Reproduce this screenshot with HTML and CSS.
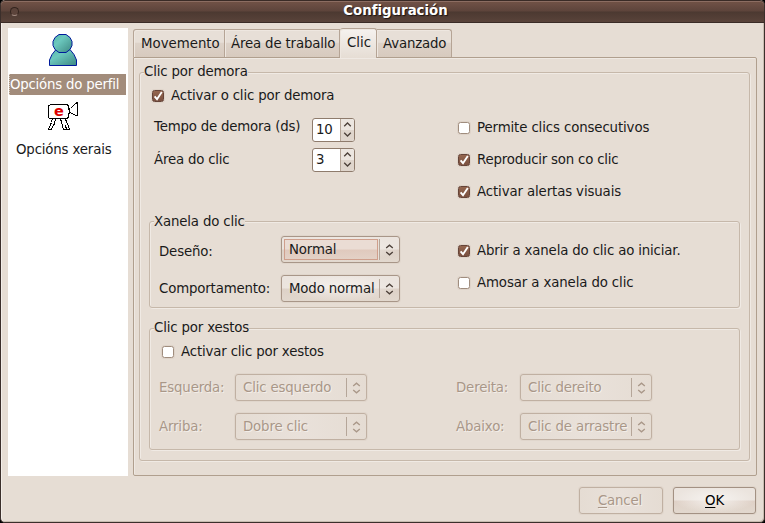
FILE: index.html
```html
<!DOCTYPE html>
<html lang="gl">
<head>
<meta charset="utf-8">
<title>Configuración</title>
<link rel="stylesheet" href="styles.css">
</head>
<body>
<svg class="defs" width="0" height="0" aria-hidden="true">
  <symbol id="tick" viewBox="0 0 12 12"><path d="M2.600 6.400 5 9.200 9.800 2" fill="none" stroke="#fff" stroke-width="1.9"/></symbol>
  <symbol id="updown" viewBox="0 0 9 12"><path d="M1.200 4 4.500 1.200 7.800 4M1.200 8 4.500 10.800 7.800 8" fill="none" stroke="currentColor" stroke-width="1.3"/></symbol>
  <symbol id="up" viewBox="0 0 9 5"><path d="M1.2 4.2 4.5 1 7.800 4.200" fill="none" stroke="currentColor" stroke-width="1.3"/></symbol>
  <symbol id="down" viewBox="0 0 9 5"><path d="M1.2 .8 4.5 4 7.800 .800" fill="none" stroke="currentColor" stroke-width="1.3"/></symbol>
</svg>
<div class="window">
  <header class="titlebar"><span class="dot"></span><h1>Configuración</h1></header>
  <main class="body">
    <nav class="sidebar">
      <svg class="person" width="30" height="34" viewBox="0 0 30 34">
        <defs><linearGradient id="teal" x1="0" y1="0" x2="1" y2="1"><stop offset="0" stop-color="#55b5aa"/><stop offset=".35" stop-color="#6cc8be"/><stop offset="1" stop-color="#3d8882"/></linearGradient></defs>
        <path d="M1.500 32.500V27L4 21.500l4-5h14l4 5 2.500 5.500v5.500z" fill="url(#teal)" stroke="#001a9c"/>
        <path d="M11 1.500h7l4 3 2 4v4l-2 4-4 3h-7l-4-3-2-4v-4l2-4z" fill="url(#teal)" stroke="#001a9c"/>
      </svg>
      <div class="entry selected">Opcións do perfil</div>
      <svg class="camera" width="32" height="30" viewBox="0 0 32 30">
        <g fill="#fff" stroke="#000" shape-rendering="crispEdges">
          <path d="M5.500 17.500l-1 4-3 6.500h3l3-5.500 1-5M13.500 17.500l1 4 2 7h3l-1-4 1 4h3l-1-4-2-3-1-4"/>
          <path d="M1.500 5l2-1.500h17l1 2v3l2-1 5-5 2-1v13h-2l-3-2-3-1-1 1v4l-2 1h-17l-1-1z"/>
          <path d="M22.500 8.500v4"/>
        </g>
        <text x="7" y="15" class="badge">e</text>
      </svg>
      <div class="entry">Opcións xerais</div>
    </nav>
    <section class="notebook">
      <div class="tabs">
        <div class="tab t1">Movemento</div><div class="tab t2">Área de traballo</div><div class="tab t3 active">Clic</div><div class="tab t4">Avanzado</div>
      </div>
      <div class="panel">
        <div class="group outer">
          <h2 class="legend">Clic por demora</h2>
          <label class="check dwell"><span class="box on"><svg><use href="#tick"/></svg></span>Activar o clic por demora</label>
          <div class="columns timing">
            <div class="left">
              <div class="row"><span class="name">Tempo de demora (ds)</span><span class="spin"><b>10</b><i><svg><use href="#up"/></svg><svg><use href="#down"/></svg></i></span></div>
              <div class="row"><span class="name second">Área do clic</span><span class="spin"><b>3</b><i><svg><use href="#up"/></svg><svg><use href="#down"/></svg></i></span></div>
            </div>
            <div class="checks">
              <label class="check wide"><span class="box"></span>Permite clics consecutivos</label>
              <label class="check tight"><span class="box on"><svg><use href="#tick"/></svg></span>Reproducir son co clic</label>
              <label class="check wide"><span class="box on"><svg><use href="#tick"/></svg></span>Activar alertas visuais</label>
            </div>
          </div>
          <div class="group inner clickwin">
            <h2 class="legend">Xanela do clic</h2>
            <div class="columns">
              <div class="left">
                <div class="row"><span class="name">Deseño:</span><span class="combo focus"><b>Normal</b><svg><use href="#updown"/></svg></span></div>
                <div class="row"><span class="name">Comportamento:</span><span class="combo"><b>Modo normal</b><svg><use href="#updown"/></svg></span></div>
              </div>
              <div class="checks">
                <label class="check"><span class="box on"><svg><use href="#tick"/></svg></span>Abrir a xanela do clic ao iniciar.</label>
                <label class="check wide"><span class="box"></span>Amosar a xanela do clic</label>
              </div>
            </div>
          </div>
          <div class="group inner gestures">
            <h2 class="legend">Clic por xestos</h2>
            <label class="check"><span class="box"></span>Activar clic por xestos</label>
            <div class="grid off">
              <span>Esquerda:</span><span class="combo"><b>Clic esquerdo</b><svg><use href="#updown"/></svg></span>
              <span class="col2">Dereita:</span><span class="combo"><b>Clic dereito</b><svg><use href="#updown"/></svg></span>
              <span>Arriba:</span><span class="combo"><b>Dobre clic</b><svg><use href="#updown"/></svg></span>
              <span class="col2">Abaixo:</span><span class="combo"><b>Clic de arrastre</b><svg><use href="#updown"/></svg></span>
            </div>
          </div>
        </div>
      </div>
    </section>
  </main>
  <footer class="actions">
    <div class="button off"><u>C</u>ancel</div>
    <div class="button"><u>O</u>K</div>
  </footer>
</div>
</body>
</html>
```
FILE: styles.css
```css
* { box-sizing: border-box; }
body { margin: 0; background: #000; color: #1a1a1a; font: 13.33px/18px "DejaVu Sans", sans-serif; letter-spacing: -.16px; overflow: hidden; }
h1, h2 { margin: 0; font-size: inherit; font-weight: normal; }
b { font-weight: normal; }
i { font-style: normal; }
svg { display: block; }
.defs { position: absolute; }
.window { width: 765px; height: 523px; border: 1px solid #3b2f2b; border-top: 0; border-radius: 5px; background: #e6ddd4; overflow: hidden; box-shadow: inset 1px 0 #f3eee9, inset -1px -1px #c8bcb0; }
.titlebar { height: 23px; margin: 0 -1px; border: 1px solid #3a2b26; border-radius: 5px 5px 0 0; background: linear-gradient(#70503f 0, #6e5045 10%, #5d443b 48%, #4c3931 52%, #59433a); box-shadow: inset 0 1px #8c6d62; display: flex; align-items: center; }
.dot { width: 9px; height: 9px; margin: -1px 0 0 9px; border: 1px solid #33241e; border-bottom-color: #a18a80; border-radius: 50%; background: #5c443b; }
h1 { flex: 1; margin: -2px 0 0 8px; text-align: center; font-weight: bold; letter-spacing: 0; color: #fff; text-shadow: 1px 1px 1px #1b1310; }
.body { display: flex; gap: 5px; height: 453px; padding: 5px 0 0 7px; }
.sidebar { width: 120px; height: 448px; background: #fff; padding: 5px 0 0 1px; }
.person { margin: 0 0 7px 39px; }
.camera { margin: 6px 0 8px 38px; }
.badge { fill: #d00; font: bold 14.5px "DejaVu Sans", sans-serif; }
.entry { width: 117px; height: 21px; padding: 2px 0 0 7px; white-space: nowrap; }
.selected { padding-left: 0; background: #a28c7b; color: #fff; border-left: 1px dotted #d8ccc0; letter-spacing: -.22px; }
.notebook { width: 624px; }
.tabs { display: flex; height: 29px; padding-top: 1px; letter-spacing: 0; }
.tab { height: 28px; border: 1px solid #b5a495; border-left: 0; border-bottom: 0; padding: 5px 0 0 7px; background: linear-gradient(#e7dfd7 45%, #ddd2c8 50%, #d7cabe); white-space: nowrap; box-shadow: inset 1px 1px #eee7e0; }
.t1 { width: 92px; border-left: 1px solid #b5a495; border-radius: 3px 0 0; }
.t2 { width: 115px; padding-left: 6px; letter-spacing: -.16px; }
.t3 { width: 37px; height: 30px; margin-top: -1px; border-radius: 3px 3px 0 0; background: linear-gradient(#f5f2ef, #e6ddd4); z-index: 1; }
.t4 { width: 75px; padding-left: 6px; border-radius: 0 3px 0 0; letter-spacing: -.16px; }
.panel { height: 419px; border: 1px solid #b09f8e; border-radius: 0 2px 2px 2px; padding: 14px 6px 0 5px; box-shadow: inset 1px 1px #efe9e3; }
.group { border: 1px solid #c6b8aa; border-radius: 3px; box-shadow: inset 1px 1px #f0eae4, 1px 1px #f0eae4; }
.outer { width: 611px; height: 389px; }
.legend { width: max-content; height: 18px; margin: -10px 0 0 4px; background: #e6ddd4; white-space: nowrap; }
.check { display: flex; align-items: center; height: 18px; gap: 7px; white-space: nowrap; }
.wide { letter-spacing: -.12px; }
.tight { letter-spacing: -.2px; }
.box { width: 12px; height: 12px; border: 1px solid #a08d7e; border-radius: 2.5px; background: #fff; box-shadow: 0 0 0 1px #ded3c9; }
.on { border-color: #664438; background: linear-gradient(#94664f, #7a5040); }
.on svg { width: 12px; height: 12px; margin: -1px; }
.dwell { margin: 6px 0 0 12px; }
.columns { display: flex; }
.row { display: flex; }
.timing { height: 116px; padding: 13px 0 0 14px; }
.timing .left { width: 304px; display: grid; grid-auto-rows: 30px; align-content: start; }
.timing .name { width: 158px; letter-spacing: -.2px; }
.timing .second { padding-top: 3px; }
.checks { display: grid; grid-auto-rows: 32px; align-content: start; }
.timing .checks { padding-top: 1px; }
.spin { width: 43px; height: 24px; display: flex; border: 1px solid #8e7b6c; border-radius: 3px; background: #fff; }
.spin b { width: 27px; padding: 2px 0 0 3px; font-size: 13.33px; }
.spin i { flex: 1; display: flex; flex-direction: column; align-items: center; justify-content: space-between; padding: 3px 0 4px; color: #4c4039; border-left: 1px solid #b5a597; background: linear-gradient(#ece6e0 48%, #dfd5cc 52%); border-radius: 0 2px 2px 0; }
.spin i svg { width: 9px; height: 5px; }
.inner { width: 591px; margin-left: 9px; }
.clickwin { height: 87px; }
.clickwin .legend { margin-top: -9px; }
.clickwin .columns { padding: 5px 0 0 9px; }
.clickwin .left { width: 299px; display: grid; grid-auto-rows: 39px; }
.clickwin .name { width: 122px; padding-top: 7px; }
.clickwin .row + .row .name { padding-top: 5px; }
.clickwin .checks { padding-top: 6px; }
.combo { height: 27px; width: 119px; display: flex; align-items: center; border: 1px solid #a89688; border-radius: 3px; background: radial-gradient(ellipse at 50% 45%, #f4f0ec, transparent 70%), linear-gradient(#ebe4de 48%, #ddd1c7 52%, #e2d8ce); box-shadow: 0 0 0 1px #e0d6cc; white-space: nowrap; }
.combo b { flex: 1; height: 19px; line-height: 19px; padding-left: 7px; border-right: 1px solid #b5a699; }
.combo svg { width: 9px; height: 12px; margin: 0 5px; color: #4c4039; }
.focus b { height: 21px; line-height: 20px; margin: 0 2px; padding-left: 4px; border: 1px solid #cf9f8c; background: linear-gradient(#eadcd4 48%, #e0c9bd 52%, #e3d1c6); box-shadow: 1px 0 #e8e0d9, 2px 0 #b5a699; }
.gestures { height: 122px; margin-top: 20px; }
.gestures > .check { margin: 6px 0 0 12px; }
.grid { display: grid; grid-template-columns: 76px 132px 89px 64px 132px; grid-template-rows: 39px 39px; margin: 13px 0 0 9px; }
.grid > span:not(.combo) { padding-top: 5px; }
.grid .col2 { grid-column: 4; }
.grid .combo { width: 132px; }
.off, .off .combo svg { color: #a99788; text-shadow: 1px 1px #f3eee9; }
.off .combo, .button.off { border-color: #c0b0a2; background: linear-gradient(90deg, #e5dcd3, #e9e1da, #e5dcd3); }
.actions { display: flex; justify-content: flex-end; gap: 10px; padding: 11px 8px 0 0; }
.button { width: 83px; height: 27px; border: 1px solid #a39183; border-radius: 3px; background: radial-gradient(ellipse at 50% 45%, #f6f3f0, transparent 70%), linear-gradient(#ebe4de 48%, #dfd1c7 52%, #e2d8ce); text-align: center; padding-top: 4px; box-shadow: 0 0 0 1px #e0d6cc; color: #000; }
.button.off { width: 84px; padding-right: 2px; color: #a99788; }
u { text-underline-offset: 2px; text-decoration-skip-ink: none; }
```
